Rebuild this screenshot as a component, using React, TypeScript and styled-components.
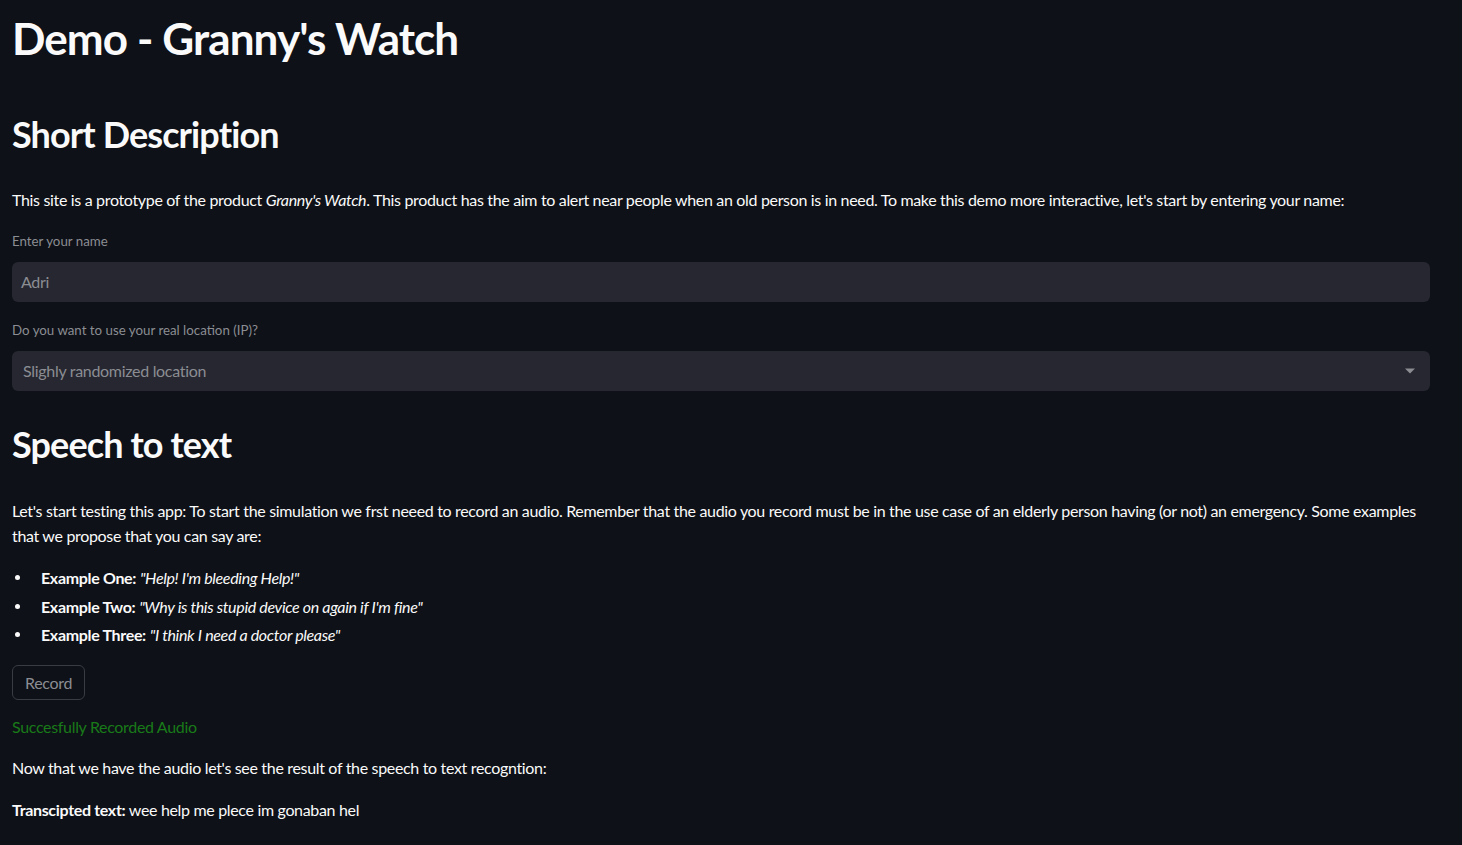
import styled, { createGlobalStyle } from "styled-components";

const Global = createGlobalStyle`
    body {
        margin: 0;
        background: #0e1117;
        color: #fafafa;
        font-family: Lato, "Liberation Sans", sans-serif;
    }
`;

const examples = [
    { name: "Example One:", quote: "\"Help! I'm bleeding Help!\"" },
    { name: "Example Two:", quote: "\"Why is this stupid device on again if I'm fine\"" },
    { name: "Example Three:", quote: "\"I think I need a doctor please\"" },
];

const App = () => {
    return (
        <Main>
            <Global />
            <Title>Demo - Granny's Watch</Title>

            <Heading $top={48}>Short Description</Heading>
            <Text $top={31}>
                This site is a prototype of the product <em>Granny's Watch</em>. This product has the aim to
                alert near people when an old person is in need. To make this demo more interactive, let's
                start by entering your name:
            </Text>

            <Label $top={17}>Enter your name</Label>
            <Field>
                <FieldText $indent={9}>Adri</FieldText>
            </Field>

            <Label $top={17}>Do you want to use your real location (IP)?</Label>
            <Field>
                <FieldText $indent={11}>Slighly randomized location</FieldText>
                <svg width="12" height="8" viewBox="0 0 12 8">
                    <path d="M1 1.5 L11 1.5 L6 6.5 Z" fill="#8b8d93" />
                </svg>
            </Field>

            <Heading $top={32}>Speech to text</Heading>
            <Text $top={32}>
                Let's start testing this app: To start the simulation we frst neeed to record an audio.
                Remember that the audio you record must be in the use case of an elderly person having (or
                not) an emergency. Some examples that we propose that you can say are:
            </Text>

            <List>
                {examples.map((item, i) => (
                    <Item key={i}>
                        <Bullet />
                        <span>
                            <b>{item.name}</b> <em>{item.quote}</em>
                        </span>
                    </Item>
                ))}
            </List>

            <RecordButton>Record</RecordButton>

            <Success>Succesfully Recorded Audio</Success>
            <Text $top={16}>Now that we have the audio let's see the result of the speech to text recogntion:</Text>
            <Text $top={16}>
                <b>Transcipted text:</b> wee help me plece im gonaban hel
            </Text>
        </Main>
    );
};

export default App;

const Main = styled.main`
    padding: 12px 32px 40px 12px;
    display: flex;
    flex-direction: column;
    align-items: flex-start;
`;

const Title = styled.h1`
    margin: 0;
    font-size: 44px;
    font-weight: 700;
    line-height: 1.2;
    letter-spacing: -0.9px;
`;

const Heading = styled.h2<{ $top: number }>`
    margin: ${(p) => p.$top}px 0 0;
    font-size: 36px;
    font-weight: 700;
    line-height: 1.2;
    letter-spacing: -0.9px;
`;

const Text = styled.p<{ $top: number }>`
    margin: ${(p) => p.$top}px 0 0;
    font-size: 16px;
    line-height: 1.6;
    letter-spacing: -0.33px;
    max-width: 1410px;
`;

const Label = styled.label<{ $top: number }>`
    margin: ${(p) => p.$top}px 0 10px;
    font-size: 13.3px;
    line-height: 22px;
    color: #8b8d93;
`;

const Field = styled.div`
    box-sizing: border-box;
    width: 100%;
    height: 40px;
    padding-right: 14px;
    background: #262730;
    border-radius: 6px;
    display: flex;
    align-items: center;
    justify-content: space-between;
`;

const FieldText = styled.span<{ $indent: number }>`
    padding-left: ${(p) => p.$indent}px;
    font-size: 16px;
    letter-spacing: -0.3px;
    color: #8b8d93;
`;

const List = styled.ul`
    margin: 16px 0 0;
    padding: 0;
    list-style: none;
    font-size: 16px;
    line-height: 1.6;
    letter-spacing: -0.33px;
`;

const Item = styled.li`
    display: flex;
    align-items: center;
    margin-bottom: 3px;
`;

const Bullet = styled.span`
    flex-shrink: 0;
    width: 5px;
    height: 5px;
    margin: 0 21px 0 3px;
    border-radius: 50%;
    background: #fafafa;
`;

const RecordButton = styled.button`
    margin-top: 14px;
    height: 35px;
    padding: 0 12px;
    background: transparent;
    border: 1px solid #3a3c44;
    border-radius: 6px;
    color: #8b8d93;
    font-family: inherit;
    font-size: 16px;
    letter-spacing: -0.3px;
`;

const Success = styled.div`
    margin-top: 14px;
    font-size: 16px;
    line-height: 1.6;
    letter-spacing: -0.33px;
    color: #197a19;
`;
